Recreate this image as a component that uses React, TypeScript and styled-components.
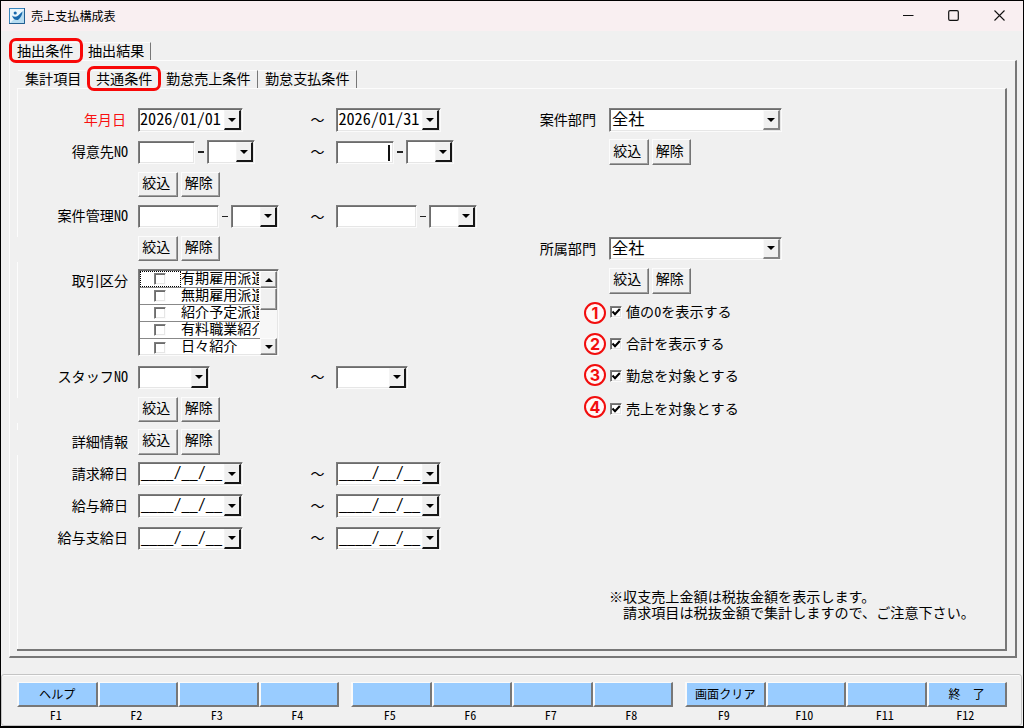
import React from 'react';
import styled, { createGlobalStyle, css } from 'styled-components';

const GlobalStyle = createGlobalStyle`
  * { box-sizing: border-box; }
  body {
    margin: 0;
    overflow: hidden;
    font-family: "Noto Sans CJK JP", sans-serif;
    font-feature-settings: "hwid" 1, "palt" 0, "kern" 0;
    font-size: 14px;
    line-height: 16px;
    color: #000;
    background: #000;
  }
`;

const sunken = css`
  border: 1px solid;
  border-color: #7e7e7e #fbfbfb #fbfbfb #7e7e7e;
  box-shadow: inset 1px 1px 0 #6c6c6c, inset -1px -1px 0 #e6e6e6;
`;

const raised = css`
  border: 1px solid;
  border-color: #fcfcfc #747474 #747474 #fcfcfc;
  box-shadow: inset -1px -1px 0 #a0a0a0;
`;

const fullWidth = css`
  font-feature-settings: normal;
`;

const Window = styled.div`
  width: 1024px;
  height: 728px;
  border: 1px solid #000;
  border-bottom-width: 2px;
  background: #f0f0f0;
  display: flex;
  flex-direction: column;
`;

const TitleBar = styled.header`
  flex: none;
  height: 30px;
  padding: 0 1px 1px 8px;
  display: flex;
  align-items: center;
  background: #f9eff1;
`;

const Title = styled.h1`
  margin: 0 0 0 6px;
  flex: 1;
  font-size: 12.1px;
  font-weight: 400;
`;

const WindowButton = styled.span`
  width: 45.5px;
  display: flex;
  justify-content: center;
`;

const Main = styled.main`
  flex: none;
  height: 643px;
  padding: 11px 6px 0 8px;
`;

const TabRow = styled.nav<{ $inner?: boolean }>`
  display: flex;
  height: 18px;
  padding-left: ${(p) => (p.$inner ? 1 : 0)}px;
`;

const Tab = styled.div<{ $w: number; $edge?: boolean; $pad: number }>`
  position: relative;
  width: ${(p) => p.$w}px;
  padding-left: ${(p) => p.$pad}px;
  border-top: 1px solid #fbfbfb;
  border-right: 1px solid ${(p) => (p.$edge ? '#777' : 'transparent')};
  font-size: 14.1px;
  line-height: 15px;
  white-space: nowrap;
`;

const Highlight = styled.span`
  position: absolute;
  left: 0;
  top: -5px;
  width: 74px;
  height: 25px;
  border: 3px solid #f80808;
  border-radius: 7px;
  z-index: 2;
`;

const OuterPage = styled.section`
  height: 598px;
  padding: 9px 8px 0 7px;
  border: solid;
  border-width: 1px 2px 2px 1px;
  border-color: #fcfcfc #777 #777 #fcfcfc;
`;

const InnerPage = styled.section`
  height: 563px;
  padding-top: 14.9px;
  border: solid;
  border-width: 1px 2px 2px 0;
  border-color: #fcfcfc #777 #777 #fcfcfc;
  background: linear-gradient(
      #fcfcfc 0 148px, #f0f0f0 148px 173px, #fcfcfc 173px 309px, #f0f0f0 309px 334px,
      #fcfcfc 334px 341px, #f0f0f0 341px 366px, #fcfcfc 366px
    ) 0 0 / 1px 100% no-repeat;
  display: grid;
  grid-template-columns: 121px 198px 191px 82px 1fr;
  grid-template-rows: repeat(14, 32.2px) 32px 32px;
`;

const Label = styled.label<{ $red?: boolean; $row: number; $col?: number }>`
  grid-row: ${(p) => p.$row};
  grid-column: ${(p) => p.$col ?? 1};
  height: 32.2px;
  padding-right: ${(p) => (p.$col ? 13 : p.$red ? 12 : 10)}px;
  text-align: right;
  font-size: 14.1px;
  line-height: 30px;
  white-space: nowrap;
  color: ${(p) => (p.$red ? '#f81010' : '#000')};
`;

const Cell = styled.div<{ $row: number; $col: number; $tall?: boolean }>`
  grid-row: ${(p) => (p.$tall ? `${p.$row} / span 3` : p.$row)};
  grid-column: ${(p) => p.$col};
  display: flex;
  align-items: ${(p) => (p.$tall ? 'flex-start' : 'center')};
  padding-top: ${(p) => (p.$tall ? 4.6 : 0)}px;
`;

const Range = styled.span`
  ${fullWidth}
  flex: none;
  width: 26px;
  margin-left: -25.6px;
  padding-bottom: 2px;
  font-size: 14px;
`;

const Input = styled.div<{ $w: number }>`
  ${sunken}
  flex: none;
  width: ${(p) => p.$w}px;
  height: 23px;
  padding: 3px 3px 0 0;
  display: flex;
  justify-content: flex-end;
  background-color: #fff;
`;

const Caret = styled.i`
  width: 2px;
  height: 16px;
  background: #111;
`;

const Dash = styled.span`
  width: 11.5px;
  display: flex;
  justify-content: center;
  &::before {
    content: '';
    width: 5.5px;
    height: 1.5px;
    background: #222;
  }
`;

const ComboBox = styled.div<{ $w: number }>`
  ${sunken}
  flex: none;
  width: ${(p) => p.$w}px;
  height: 23.5px;
  padding: 1px 1px 1px 1px;
  display: flex;
  justify-content: space-between;
  background-color: #fff;
  white-space: pre;
`;

const ComboText = styled.span<{ $pad: number }>`
  padding-left: ${(p) => p.$pad}px;
  font-size: 16.2px;
  line-height: 16px;
`;

const DateMask = styled.span`
  width: 81px;
  margin-left: 1px;
  font-family: "Liberation Mono", monospace;
  font-size: 18px;
  line-height: 20px;
  transform: scaleX(0.75);
  transform-origin: 0 0;
`;

const ComboButton = styled.span<{ $flat?: boolean }>`
  flex: none;
  width: 17px;
  height: 20px;
  display: flex;
  align-items: center;
  justify-content: center;
  background: #f0f0f0;
  border: solid;
  border-width: 1px 2px 2px 1px;
  border-color: ${(p) => (p.$flat ? '#fafafa #858585 #858585 #fafafa' : '#f4f4f4 #161616 #161616 #f4f4f4')};
`;

const Button = styled.button`
  ${raised}
  width: 39.5px;
  height: 25.5px;
  margin: 0 3px 0 0;
  padding: 0 3px 4px 0;
  background: #f0f0f0;
  font: inherit;
  font-size: 14px;
  line-height: 19px;
  white-space: nowrap;
  color: #000;
`;

const ListBox = styled.div`
  ${sunken}
  width: 141px;
  height: 87px;
  padding: 1px;
  display: flex;
  background-color: #fff;
`;

const ListRows = styled.div`
  width: 121px;
  display: grid;
  grid-template-rows: repeat(5, 17px);
  overflow: hidden;
`;

const ListRow = styled.div`
  height: 17px;
  display: grid;
  grid-template-columns: 41px 80px;
  border-bottom: 1px solid #888;
  font-size: 14.1px;
  line-height: 13px;
  white-space: nowrap;
  &:last-child { border-bottom: 0; }
`;

const ListCheck = styled.span<{ $focus?: boolean }>`
  display: flex;
  align-items: center;
  justify-content: center;
  padding: 0 2px 0 0;
  outline: ${(p) => (p.$focus ? '1px dotted #000' : 'none')};
  outline-offset: -1px;
`;

const ListText = styled.span`
  width: 78px;
  overflow: hidden;
`;

const Box = styled.span`
  ${sunken}
  width: 12px;
  height: 12px;
  display: flex;
  background-color: #fff;
`;

const ScrollBar = styled.div`
  width: 17px;
  height: 84px;
  display: flex;
  flex-direction: column;
  background: #f7f7f7;
`;

const ScrollPart = styled.span<{ $h: number; $end?: boolean }>`
  ${raised}
  height: ${(p) => p.$h}px;
  margin-top: ${(p) => (p.$end ? 'auto' : 0)};
  display: flex;
  align-items: center;
  justify-content: center;
  background-color: #f0f0f0;
`;

const CheckLine = styled.div<{ $row: number }>`
  grid-row: ${(p) => p.$row};
  grid-column: 4 / span 2;
  display: flex;
  align-items: center;
  padding: 0 0 2px 57px;
  font-size: 14.1px;
`;

const Badge = styled.span<{ $lift: number }>`
  width: 22px;
  height: 22px;
  margin: 0 3.5px 0 0;
  transform: translateY(${(p) => p.$lift}px);
  border: 2px solid #f20d0d;
  border-radius: 50%;
  background: #fff8f8;
  color: #f20d0d;
  font: 700 16px/18px Inter, sans-serif;
  text-align: center;
`;

const CheckText = styled.span`
  margin-left: 4.5px;
  padding-bottom: 2px;
`;

const Note = styled.p`
  ${fullWidth}
  grid-row: 16;
  grid-column: 5;
  margin: 1.5px 0 0;
  font-size: 14.1px;
  line-height: 16px;
  white-space: pre;
`;

const Footer = styled.footer`
  flex: none;
  height: 52px;
  margin-right: 1px;
  border: 1px solid #c4c4c4;
  border-radius: 3px;
  box-shadow: inset 0 1px 0 #fcfcfc;
  padding: 7px 0 0 15px;
  display: flex;
  gap: 12px;
`;

const KeyGroup = styled.div`
  display: flex;
`;

const Key = styled.div`
  width: 80.5px;
  text-align: center;
  font-size: 12.1px;
  white-space: pre;
`;

const KeyFace = styled.div`
  ${fullWidth}
  height: 25px;
  border: solid;
  border-width: 1px 2px 2px 2px;
  border-color: #fafafa #777 #777 #fafafa;
  background: #99ccff;
  line-height: 21px;
`;

const KeyName = styled.div`
  padding-right: 3px;
  line-height: 15px;
`;

function Arrow({ up }: { up?: boolean }) {
  return (
    <svg width="8" height="4" viewBox="0 0 8 4">
      <path d={up ? 'M0 4H8L4 0Z' : 'M0 0H8L4 4Z'} fill="#000" />
    </svg>
  );
}

const blankDate = '____/__/__';

function Combo({ w, text = '', flat }: { w: number; text?: string; flat?: boolean }) {
  return (
    <ComboBox $w={w}>
      {text === blankDate
        ? <DateMask>{text}</DateMask>
        : <ComboText $pad={flat ? 1 : 0}>{text}</ComboText>}
      <ComboButton $flat={flat}><Arrow /></ComboButton>
    </ComboBox>
  );
}

function Actions() {
  return (
    <>
      <Button>絞込</Button>
      <Button>解除</Button>
    </>
  );
}

function RangeRow({ row, children, end }: { row: number; children: React.ReactNode; end: React.ReactNode }) {
  return (
    <>
      <Cell $row={row} $col={2}>{children}</Cell>
      <Cell $row={row} $col={3}><Range>～</Range>{end}</Cell>
    </>
  );
}

const dateRows: [number, string, string, string][] = [
  [1, '年月日', '2026/01/01', '2026/01/31'],
  [12, '請求締日', blankDate, blankDate],
  [13, '給与締日', blankDate, blankDate],
  [14, '給与支給日', blankDate, blankDate],
];
const kinds = ['有期雇用派遣', '無期雇用派遣', '紹介予定派遣', '有料職業紹介', '日々紹介'];
const options = ['値の0を表示する', '合計を表示する', '勤怠を対象とする', '売上を対象とする'];
const keys = [
  ['ヘルプ', '', '', ''],
  ['', '', '', ''],
  ['画面クリア', '', '', '終　了'],
];

export default function App() {
  return (
    <Window>
      <GlobalStyle />
      <TitleBar>
        <svg width="16" height="16" viewBox="0 0 16 16">
          <rect x=".5" y=".5" width="15" height="15" fill="#e9f5fc" stroke="#3a86bd" />
          <path d="M1 15h14V2z" fill="#b7dcf1" />
          <path d="M3 7.500q3 2.500 6 .3L13.500 3.500q-.5 5.500-4.500 8.500-4.500 .5-6-4.500z" fill="#1768ad" />
          <circle cx="6.2" cy="5" r="1.6" fill="#1768ad" />
          <path d="M15.5 0v15.5H0" fill="none" stroke="#245f91" />
        </svg>
        <Title>売上支払構成表</Title>
        <WindowButton><svg width="11" height="11"><path d="M0 5.5h10.5" stroke="#111" /></svg></WindowButton>
        <WindowButton><svg width="11" height="11"><rect x=".7" y=".7" width="9.6" height="9.6" rx="1.3" fill="none" stroke="#111" strokeWidth="1.2" /></svg></WindowButton>
        <WindowButton><svg width="11" height="11"><path d="M.5.5l10 10M10.5 .5l-10 10" stroke="#111" strokeWidth="1.1" /></svg></WindowButton>
      </TitleBar>
      <Main>
        <TabRow>
          <Tab $w={76} $pad={8}>抽出条件<Highlight /></Tab>
          <Tab $w={66} $pad={3} $edge>抽出結果</Tab>
        </TabRow>
        <OuterPage>
          <TabRow $inner>
            <Tab $w={69} $pad={7}>集計項目</Tab>
            <Tab $w={76} $pad={9}>共通条件<Highlight /></Tab>
            <Tab $w={95} $pad={3} $edge>勤怠売上条件</Tab>
            <Tab $w={99} $pad={7} $edge>勤怠支払条件</Tab>
          </TabRow>
          <InnerPage>
            {dateRows.map(([row, label, from, to]) => (
              <React.Fragment key={label}>
                <Label $row={row} $red={row === 1}>{label}</Label>
                <RangeRow row={row} end={<Combo w={104.5} text={to} />}>
                  <Combo w={104.5} text={from} />
                </RangeRow>
              </React.Fragment>
            ))}

            <Label $row={2}>得意先NO</Label>
            <RangeRow row={2} end={<><Input $w={58}><Caret /></Input><Dash /><Combo w={48} /></>}>
              <Input $w={57} /><Dash /><Combo w={48.5} />
            </RangeRow>
            <Cell $row={3} $col={2}><Actions /></Cell>

            <Label $row={4}>案件管理NO</Label>
            <RangeRow row={4} end={<><Input $w={81} /><Dash /><Combo w={48.5} /></>}>
              <Input $w={81} /><Dash /><Combo w={48.5} />
            </RangeRow>
            <Cell $row={5} $col={2}><Actions /></Cell>

            <Label $row={6}>取引区分</Label>
            <Cell $row={6} $col={2} $tall>
              <ListBox>
                <ListRows>
                  {kinds.map((kind, i) => (
                    <ListRow key={kind}>
                      <ListCheck $focus={i === 0}><Box /></ListCheck>
                      <ListText>{kind}</ListText>
                    </ListRow>
                  ))}
                </ListRows>
                <ScrollBar>
                  <ScrollPart $h={17}><Arrow up /></ScrollPart>
                  <ScrollPart $h={22} />
                  <ScrollPart $h={17} $end><Arrow /></ScrollPart>
                </ScrollBar>
              </ListBox>
            </Cell>

            <Label $row={9}>スタッフNO</Label>
            <RangeRow row={9} end={<Combo w={72} />}><Combo w={72} /></RangeRow>
            <Cell $row={10} $col={2}><Actions /></Cell>
            <Label $row={11}>詳細情報</Label>
            <Cell $row={11} $col={2}><Actions /></Cell>

            <Label $row={1} $col={4}>案件部門</Label>
            <Cell $row={1} $col={5}><Combo w={173} text="全社" flat /></Cell>
            <Cell $row={2} $col={5}><Actions /></Cell>
            <Label $row={5} $col={4}>所属部門</Label>
            <Cell $row={5} $col={5}><Combo w={173} text="全社" flat /></Cell>
            <Cell $row={6} $col={5}><Actions /></Cell>

            {options.map((option, i) => (
              <CheckLine key={option} $row={7 + i}>
                <Badge $lift={1 - i}>{i + 1}</Badge>
                <Box>
                  <svg width="10" height="10" viewBox="0 0 10 10">
                    <path d="M1.5 4.5L4 7.2L8.8 2" fill="none" stroke="#000" strokeWidth="2" />
                  </svg>
                </Box>
                <CheckText>{option}</CheckText>
              </CheckLine>
            ))}

            <Note>{'※収支売上金額は税抜金額を表示します。\n　請求項目は税抜金額で集計しますので、ご注意下さい。'}</Note>
          </InnerPage>
        </OuterPage>
      </Main>
      <Footer>
        {keys.map((group, g) => (
          <KeyGroup key={g}>
            {group.map((face, i) => (
              <Key key={i}>
                <KeyFace>{face}</KeyFace>
                <KeyName>{`F${g * 4 + i + 1}`}</KeyName>
              </Key>
            ))}
          </KeyGroup>
        ))}
      </Footer>
    </Window>
  );
}
